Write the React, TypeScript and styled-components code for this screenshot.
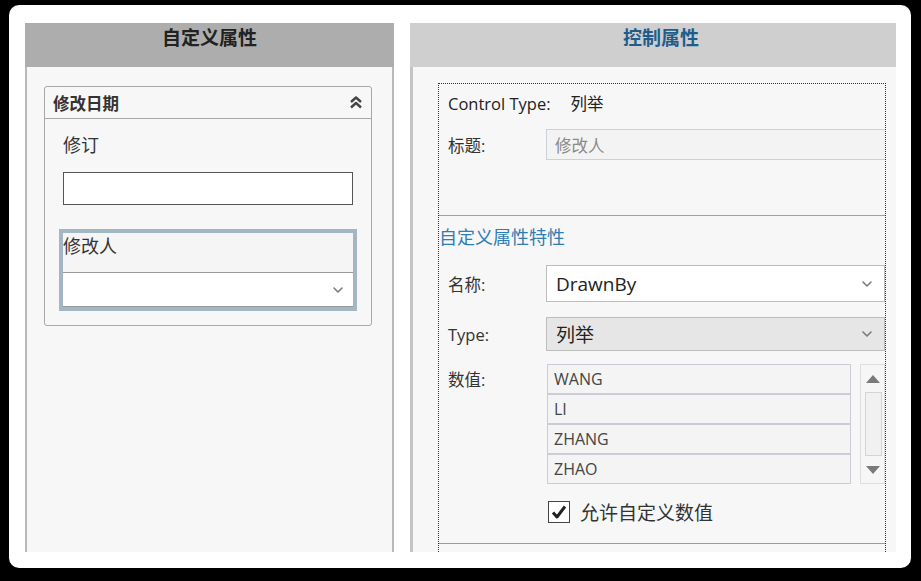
import React from "react";
import styled, { createGlobalStyle } from "styled-components";

const FONT = `"Open Sans", "Noto Sans CJK SC", sans-serif`;

const GlobalStyle = createGlobalStyle`
    html, body {
        margin: 0;
        padding: 0;
        background: #000;
    }
    body {
        font-family: ${FONT};
        width: 921px;
        height: 581px;
        overflow: hidden;
    }
    * { box-sizing: border-box; }
`;

const Chevron = () => (
    <svg width="10" height="6" viewBox="0 0 10 6">
        <polyline points="1,1 5,5 9,1" fill="none" stroke="#7a7a7a" strokeWidth="1.6" strokeLinecap="round" strokeLinejoin="round" />
    </svg>
);

const DoubleChevron = () => (
    <svg width="14" height="13" viewBox="0 0 14 13">
        <polyline points="2,6 7,1.5 12,6" fill="none" stroke="#444" strokeWidth="2.4" strokeLinejoin="round" />
        <polyline points="2,11.5 7,7 12,11.5" fill="none" stroke="#444" strokeWidth="2.4" strokeLinejoin="round" />
    </svg>
);

const CheckMark = () => (
    <svg width="18" height="18" viewBox="0 0 18 18">
        <polyline points="3,9.5 7,14 15,3.5" fill="none" stroke="#222" strokeWidth="3" strokeLinejoin="round" />
    </svg>
);

const App = () => {
    const values = ["WANG", "LI", "ZHANG", "ZHAO"];

    return (
        <>
            <GlobalStyle />
            <Frame>
                <LeftPanel>
                    <PanelHeader $bg="#adadad" $color="#222">自定义属性</PanelHeader>
                    <LeftBody>
                        <GroupBox>
                            <GroupHeader>
                                <span>修改日期</span>
                                <DoubleChevron />
                            </GroupHeader>
                            <GroupBody>
                                <FieldLabel>修订</FieldLabel>
                                <TextInput />
                                <SelectedField>
                                    <SelectedLabel>修改人</SelectedLabel>
                                    <FieldDrop>
                                        <Chevron />
                                    </FieldDrop>
                                </SelectedField>
                            </GroupBody>
                        </GroupBox>
                    </LeftBody>
                </LeftPanel>

                <RightPanel>
                    <PanelHeader $bg="#cfcfcf" $color="#1f5e8c" $shift={16}>控制属性</PanelHeader>
                    <RightBody>
                        <DottedBox>
                            <TopSection>
                                <Row $h={38}>
                                    <PlainText>Control Type:</PlainText>
                                    <TypeValue>列举</TypeValue>
                                </Row>
                                <Row $h={31} $mt={7}>
                                    <Label>标题:</Label>
                                    <ReadOnlyInput>修改人</ReadOnlyInput>
                                </Row>
                            </TopSection>

                            <SectionTitle>自定义属性特性</SectionTitle>
                            <Rows>
                                <Row $h={37} $mt={7}>
                                    <Label>名称:</Label>
                                    <Select $bg="#ffffff">
                                        <span>DrawnBy</span>
                                        <Chevron />
                                    </Select>
                                </Row>
                                <Row $h={34} $mt={15}>
                                    <Label>Type:</Label>
                                    <Select $bg="#e6e6e6">
                                        <span>列举</span>
                                        <Chevron />
                                    </Select>
                                </Row>
                                <ValuesRow>
                                    <Label $top>数值:</Label>
                                    <ValueList>
                                        {values.map((v) => (
                                            <ValueItem key={v}>{v}</ValueItem>
                                        ))}
                                    </ValueList>
                                    <ScrollBar>
                                        <ArrowCell><UpArrow /></ArrowCell>
                                        <Track />
                                        <ArrowCell><DownArrow /></ArrowCell>
                                    </ScrollBar>
                                </ValuesRow>
                                <CheckRow>
                                    <CheckBox><CheckMark /></CheckBox>
                                    <CheckText>允许自定义数值</CheckText>
                                </CheckRow>
                            </Rows>
                            <Divider />
                        </DottedBox>
                    </RightBody>
                </RightPanel>
            </Frame>
        </>
    );
};

export default App;



const Frame = styled.div`
    margin: 5px 0 0 9px;
    width: 902px;
    height: 563px;
    background: #fff;
    border-radius: 10px;
    overflow: hidden;
    display: flex;
    align-items: flex-start;
    gap: 16px;
    padding: 18px 15px 0 16px;
`;

const LeftPanel = styled.div`
    width: 369px;
    height: 529px;
    display: flex;
    flex-direction: column;
`;

const RightPanel = styled.div`
    width: 486px;
    height: 529px;
    display: flex;
    flex-direction: column;
`;

const PanelHeader = styled.div<{ $bg: string; $color: string; $shift?: number }>`
    height: 44px;
    flex-shrink: 0;
    background: ${(p) => p.$bg};
    color: ${(p) => p.$color};
    font-size: 19px;
    font-weight: bold;
    line-height: 28px;
    padding-top: 0;
    padding-left: ${(p) => p.$shift || 0}px;
    text-align: center;
    font-family: "Noto Sans CJK SC", sans-serif;
`;

const LeftBody = styled.div`
    flex: 1;
    background: #f7f7f7;
    border-left: 2px solid #b9b9b9;
    border-right: 2px solid #b9b9b9;
    padding: 19px 0 0 17px;
`;

const GroupBox = styled.div`
    width: 328px;
    border: 1px solid #a8a8ac;
    border-radius: 3px;
    background: #f7f7f7;
`;

const GroupHeader = styled.div`
    height: 32px;
    border-bottom: 1px solid #a8a8ac;
    display: flex;
    align-items: center;
    justify-content: space-between;
    padding: 0 8px 0 8px;
    font-size: 16.5px;
    font-weight: bold;
    color: #333;
`;

const GroupBody = styled.div`
    padding: 0 18px 14px 14px;
`;

const FieldLabel = styled.div`
    height: 53px;
    line-height: 53px;
    padding-left: 4px;
    font-size: 18px;
    color: #333;
`;

const TextInput = styled.div`
    margin-left: 4px;
    width: 290px;
    height: 33px;
    background: #fff;
    border: 1.5px solid #555;
`;

const SelectedField = styled.div`
    margin-top: 24px;
    width: 298px;
    height: 82px;
    border: 4px solid #a3b6c3;
    display: flex;
    flex-direction: column;
`;

const SelectedLabel = styled.div`
    height: 39px;
    font-size: 18px;
    line-height: 26px;
    color: #333;
    background: #f5f5f5;
`;

const FieldDrop = styled.div`
    flex: 1;
    background: #fff;
    border-top: 1px solid #9a9a9a;
    border-bottom: 1px solid #9a9a9a;
    display: flex;
    align-items: center;
    justify-content: flex-end;
    padding-right: 10px;
`;

const RightBody = styled.div`
    flex: 1;
    background: #f7f7f7;
    border-left: 3px solid #c4c4c4;
    padding: 16px 10px 0 25px;
    display: flex;
`;

const DottedBox = styled.div`
    flex: 1;
    border: 1px dotted #333;
    border-bottom: none;
    display: flex;
    flex-direction: column;
`;

const TopSection = styled.div`
    height: 132px;
    padding-left: 9px;
    border-bottom: 1px solid #a0a0a0;
`;

const Row = styled.div<{ $h: number; $mt?: number }>`
    height: ${(p) => p.$h}px;
    margin-top: ${(p) => p.$mt || 0}px;
    display: flex;
    align-items: center;
`;

const PlainText = styled.span`
    font-size: 16.5px;
    color: #222;
`;

const TypeValue = styled(PlainText)`
    margin-left: 20px;
`;

const Label = styled.div<{ $top?: boolean }>`
    width: 98px;
    flex-shrink: 0;
    font-size: 16.5px;
    color: #333;
    align-self: ${(p) => (p.$top ? "flex-start" : "center")};
    line-height: ${(p) => (p.$top ? "32px" : "normal")};
`;

const ReadOnlyInput = styled.div`
    flex: 1;
    height: 31px;
    background: #f3f3f3;
    border: 1px solid #cdd0d8;
    border-right: none;
    display: flex;
    align-items: center;
    padding-left: 8px;
    font-size: 16.5px;
    color: #8a8a8a;
`;

const SectionTitle = styled.div`
    height: 42px;
    line-height: 42px;
    font-size: 18px;
    color: #2e7db4;
`;

const Rows = styled.div`
    padding-left: 9px;
`;

const Select = styled.div<{ $bg: string }>`
    flex: 1;
    height: 100%;
    background: ${(p) => p.$bg};
    border: 1px solid #bdbdbd;
    display: flex;
    align-items: center;
    justify-content: space-between;
    padding: 0 12px 0 9px;
    font-size: 19px;
    color: #222;
`;

const ValuesRow = styled.div`
    margin-top: 13px;
    height: 120px;
    display: flex;
`;

const ValueList = styled.div`
    margin-left: 1px;
    width: 304px;
    display: flex;
    flex-direction: column;
`;

const ValueItem = styled.div`
    height: 30px;
    background: #f4f4f4;
    border: 1px solid #cbccd6;
    display: flex;
    align-items: center;
    padding-left: 6px;
    font-size: 16px;
    color: #444;
`;

const ScrollBar = styled.div`
    margin-left: 9px;
    width: 25px;
    border: 1px solid #dedede;
    background: #f6f6f6;
    display: flex;
    flex-direction: column;
`;

const ArrowCell = styled.div`
    height: 27px;
    display: flex;
    align-items: center;
    justify-content: center;
`;

const UpArrow = styled.div`
    width: 0;
    height: 0;
    border-left: 7px solid transparent;
    border-right: 7px solid transparent;
    border-bottom: 8px solid #7a7a7a;
`;

const DownArrow = styled.div`
    width: 0;
    height: 0;
    border-left: 7px solid transparent;
    border-right: 7px solid transparent;
    border-top: 8px solid #7a7a7a;
`;

const Track = styled.div`
    flex: 1;
    margin: 0 2px 0 4px;
    border: 1px solid #d4d4d4;
    background: #f1f1f1;
`;

const CheckRow = styled.div`
    margin-top: 17px;
    margin-left: 100px;
    height: 22px;
    display: flex;
    align-items: center;
    gap: 10px;
`;

const CheckBox = styled.div`
    width: 22px;
    height: 22px;
    border: 1.5px solid #444;
    background: #fff;
    display: flex;
    align-items: center;
    justify-content: center;
`;

const CheckText = styled.span`
    font-size: 19px;
    color: #333;
`;

const Divider = styled.div`
    margin-top: 20px;
    border-top: 1px solid #9a9a9a;
`;
